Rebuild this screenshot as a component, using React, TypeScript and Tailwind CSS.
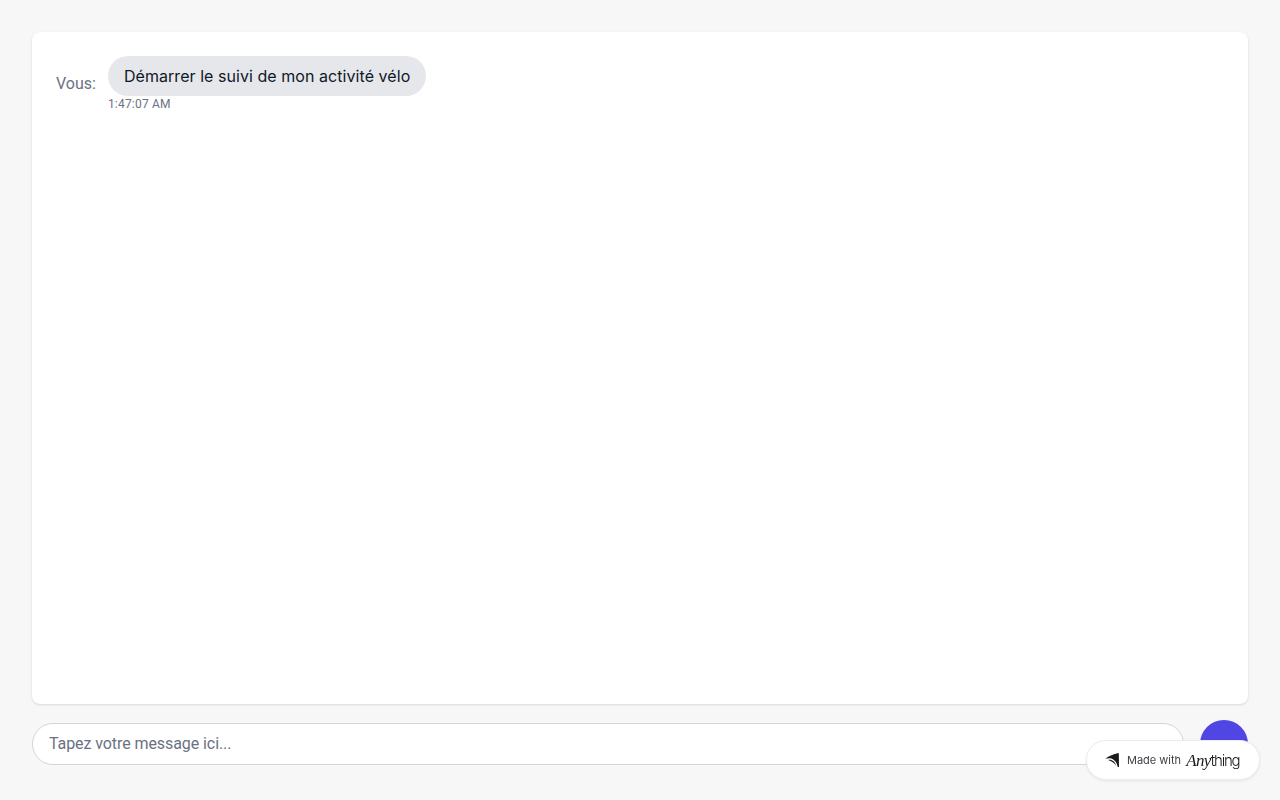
function MadeWithBadge() {
  return (
    <div className="fixed right-[20px] bottom-[20px] flex h-[40px] w-[174px] items-center rounded-full border border-[#ececec] bg-white pl-[18px] shadow-[0_1px_3px_rgba(0,0,0,0.08)]">
      <svg width="14" height="14" viewBox="0 0 14 14" className="mr-[8px] shrink-0">
        <path d="M0.3 6 C3 3.4 8 1 13.8 0 L14 14 L12.7 14 C12.2 9.6 9.2 5.8 5 5.2 C3.2 5 1.6 5.3 0.3 6 Z" fill="#1a1a1a" />
        <path d="M3.2 7 C6.8 6.2 10 8.6 11.2 12.8 C9.2 10 6.6 8 3.2 7 Z" fill="#1a1a1a" />
      </svg>
      <span className="font-['Inter',sans-serif] text-[11px] leading-none text-[#3f3f46]">Made with</span>
      <span className="ml-[5px] flex items-baseline leading-none text-[#18181b]">
        <span className="font-['Liberation_Serif',serif] text-[17px] font-light tracking-[-0.6px] italic">Any</span>
        <span className="font-['Inter',sans-serif] text-[15px] font-light tracking-[-1.2px]">thing</span>
      </span>
    </div>
  );
}

export default function App() {
  return (
    <div className="flex h-screen flex-col bg-[#f7f7f7] p-8 font-['Roboto',sans-serif]">
      <div className="mb-4 flex-1 rounded-lg bg-white p-6 shadow">
        <div className="flex items-center">
          <span className="mr-3 text-base text-gray-500">Vous:</span>
          <div>
            <div className="rounded-[20px] bg-gray-200 px-4 py-2 font-['Inter',sans-serif] text-base tracking-[0.055px] text-gray-900">
              Démarrer le suivi de mon activité vélo
            </div>
            <div className="text-xs tracking-[0.2px] text-gray-500">1:47:07 AM</div>
          </div>
        </div>
      </div>
      <div className="flex items-center gap-4">
        <input
          type="text"
          placeholder="Tapez votre message ici..."
          className="h-[42px] flex-1 rounded-full border border-gray-300 bg-white px-4 pb-[2px] text-base tracking-[-0.08px] outline-none placeholder:text-gray-500"
        />
        <button className="h-12 w-12 rounded-full bg-[#4f46e5]"></button>
      </div>
      <MadeWithBadge />
    </div>
  );
}
